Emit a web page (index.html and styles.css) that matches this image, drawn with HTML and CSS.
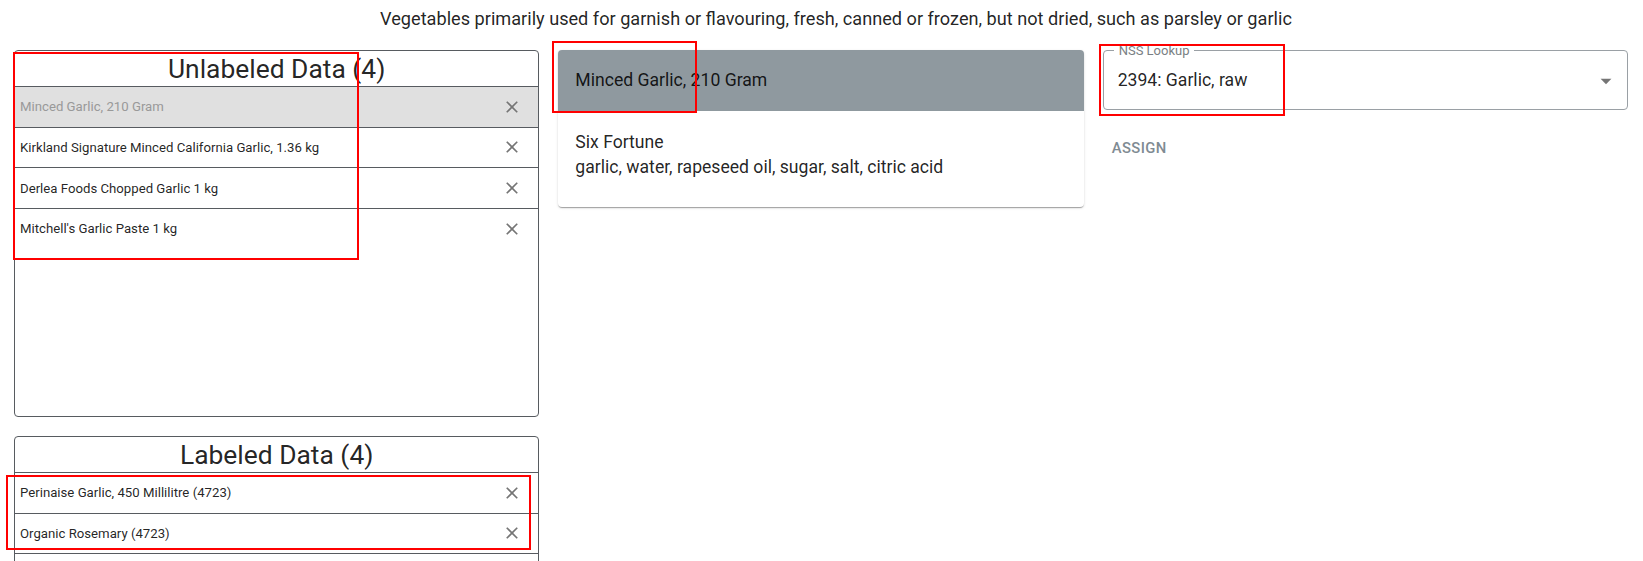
FILE: index.html
```html
<!DOCTYPE html>
<html lang="en">
<head>
<meta charset="utf-8">
<title>Labeling</title>
<link rel="stylesheet" href="styles.css">
</head>
<body>
<div class="page">
  <p class="desc">Vegetables primarily used for garnish or flavouring, fresh, canned or frozen, but not dried, such as parsley or garlic</p>
  <div class="grid">
    <div class="lists">
      <section class="box box-unlabeled">
        <h2 class="box-title">Unlabeled Data (4)</h2>
        <ul class="rows">
          <li class="row row-selected"><span class="row-text">Minced Garlic, 210 Gram</span><svg class="x" viewBox="0 0 24 24"><path d="M19 6.41 17.59 5 12 10.59 6.41 5 5 6.41 10.59 12 5 17.59 6.41 19 12 13.41 17.59 19 19 17.59 13.41 12z"/></svg></li>
          <li class="row"><span class="row-text">Kirkland Signature Minced California Garlic, 1.36 kg</span><svg class="x" viewBox="0 0 24 24"><path d="M19 6.41 17.59 5 12 10.59 6.41 5 5 6.41 10.59 12 5 17.59 6.41 19 12 13.41 17.59 19 19 17.59 13.41 12z"/></svg></li>
          <li class="row"><span class="row-text">Derlea Foods Chopped Garlic 1 kg</span><svg class="x" viewBox="0 0 24 24"><path d="M19 6.41 17.59 5 12 10.59 6.41 5 5 6.41 10.59 12 5 17.59 6.41 19 12 13.41 17.59 19 19 17.59 13.41 12z"/></svg></li>
          <li class="row"><span class="row-text">Mitchell's Garlic Paste 1 kg</span><svg class="x" viewBox="0 0 24 24"><path d="M19 6.41 17.59 5 12 10.59 6.41 5 5 6.41 10.59 12 5 17.59 6.41 19 12 13.41 17.59 19 19 17.59 13.41 12z"/></svg></li>
        </ul>
      </section>
      <section class="box box-labeled">
        <h2 class="box-title">Labeled Data (4)</h2>
        <ul class="rows">
          <li class="row"><span class="row-text">Perinaise Garlic, 450 Millilitre (4723)</span><svg class="x" viewBox="0 0 24 24"><path d="M19 6.41 17.59 5 12 10.59 6.41 5 5 6.41 10.59 12 5 17.59 6.41 19 12 13.41 17.59 19 19 17.59 13.41 12z"/></svg></li>
          <li class="row"><span class="row-text">Organic Rosemary (4723)</span><svg class="x" viewBox="0 0 24 24"><path d="M19 6.41 17.59 5 12 10.59 6.41 5 5 6.41 10.59 12 5 17.59 6.41 19 12 13.41 17.59 19 19 17.59 13.41 12z"/></svg></li>
          <li class="row row-empty"></li>
        </ul>
      </section>
    </div>

    <div class="card">
      <div class="card-head">Minced Garlic, 210 Gram</div>
      <div class="card-body">
        <div>Six Fortune</div>
        <div>garlic, water, rapeseed oil, sugar, salt, citric acid</div>
      </div>
    </div>

    <div class="assign">
      <div class="select">
        <span class="select-value">2394: Garlic, raw</span>
        <svg class="arrow" viewBox="0 0 24 24"><path d="M7 10l5 5 5-5z"/></svg>
        <fieldset class="outline"><legend class="legend">NSS Lookup</legend></fieldset>
      </div>
      <button class="assign-btn" type="button">ASSIGN</button>
    </div>
  </div>

  <div class="mark mark-1"></div>
  <div class="mark mark-2"></div>
  <div class="mark mark-3"></div>
  <div class="mark mark-4"></div>
</div>
</body>
</html>
```

FILE: styles.css
```css
* { box-sizing: border-box; }
html, body { margin: 0; padding: 0; background: #fff; }
body {
  font-family: Roboto, "Noto Sans", "Liberation Sans", sans-serif;
  color: rgba(0, 0, 0, 0.87);
  width: 1643px;
  height: 561px;
  overflow: hidden;
}
.page { position: relative; height: 561px; overflow: hidden; }

.desc {
  margin: 0;
  padding: 8px 0 0 29px;
  height: 50px;
  font-size: 18.15px;
  line-height: 21px;
  text-align: center;
}

.grid {
  display: grid;
  grid-template-columns: 525.33px 525.33px 525.33px;
  column-gap: 19px;
  padding-left: 14px;
  align-items: start;
}

.lists { display: flex; flex-direction: column; gap: 19px; }

.box {
  border: 1px solid #575b60;
  border-radius: 4px;
  overflow: hidden;
}
.box-unlabeled { height: 367px; }
.box-labeled { height: 140px; }

.box-title {
  margin: 0;
  height: 35px;
  padding-top: 1px;
  font-size: 26.4px;
  line-height: 34px;
  font-weight: 400;
  text-align: center;
}

.rows { list-style: none; margin: 0; padding: 0; }
.row {
  display: flex;
  align-items: center;
  justify-content: space-between;
  height: 40.67px;
  border-top: 1px solid #575b60;
  padding: 0 16px 0 5px;
}
.row-selected { background: #e0e0e0; color: #999999; }
.row-text { font-size: 13.2px; }
.x { width: 20px; height: 20px; fill: #757575; }

.card {
  border-radius: 4px;
  overflow: hidden;
  background: #fff;
  box-shadow: 0 2px 1px -1px rgba(0,0,0,0.2), 0 1px 1px 0 rgba(0,0,0,0.14), 0 1px 3px 0 rgba(0,0,0,0.12);
  font-size: 17.6px;
}
.card-head {
  height: 60.7px;
  line-height: 61px;
  padding: 0 17px;
  background: #8f999f;
}
.card-body {
  padding: 19px 17px 27px;
  line-height: 25px;
}

.assign { display: flex; flex-direction: column; align-items: flex-start; }
.select {
  position: relative;
  width: 100%;
  height: 59.5px;
  margin-top: 0.7px;
  display: flex;
  align-items: center;
  padding: 0 9px 0 15px;
  font-size: 17.6px;
}
.select-value { flex: 1; }
.arrow { width: 26px; height: 26px; fill: #757575; position: relative; top: 1px; }
.outline {
  position: absolute;
  inset: -6px 0 0 0;
  margin: 0;
  padding: 0 10px;
  border: 1px solid #9aa0a5;
  border-radius: 4px;
  pointer-events: none;
}
.legend {
  padding: 0 5px;
  font-size: 13px;
  line-height: 11px;
  color: #7a7f84;
}

.assign-btn {
  margin: 29px 0 0 0;
  padding: 0 0 0 9px;
  border: 0;
  background: transparent;
  font-family: Roboto, "Noto Sans", sans-serif;
  font-size: 14.8px;
  font-weight: 500;
  letter-spacing: 0.42px;
  color: #7f8b93;
}

.mark {
  position: absolute;
  border: 2px solid #ff0000;
  pointer-events: none;
}
.mark-1 { left: 13px; top: 52px; width: 346px; height: 208px; }
.mark-2 { left: 552px; top: 41px; width: 145px; height: 72px; }
.mark-3 { left: 1099px; top: 44px; width: 186px; height: 72px; }
.mark-4 { left: 6px; top: 475px; width: 525px; height: 75px; }
```
